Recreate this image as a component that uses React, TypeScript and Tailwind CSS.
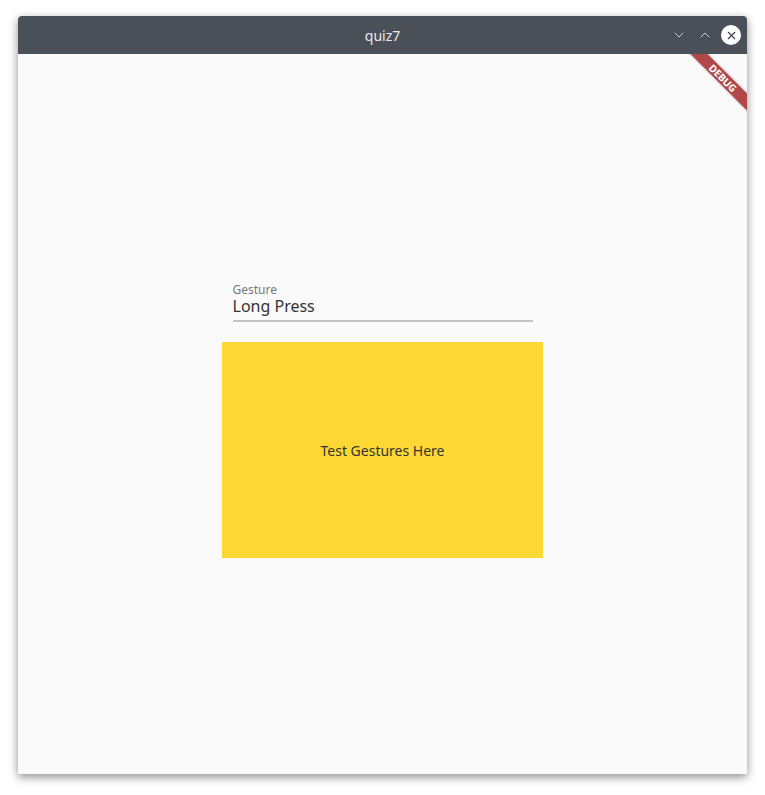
import { ChevronDown, ChevronUp, X } from "lucide-react";

const font = { fontFamily: '"Noto Sans", "Open Sans", sans-serif' };

const DebugBanner = () => (
  <div className="pointer-events-none absolute right-0 top-0 h-[72px] w-[72px] overflow-hidden">
    <div className="absolute right-[-26px] top-[18px] h-[12px] w-[100px] rotate-45 bg-[#b2474a] text-center text-[10px] font-bold leading-[12px] text-white shadow-[0_0_3px_rgba(0,0,0,0.3)]">
      DEBUG
    </div>
  </div>
);

export default function App() {
  return (
    <div className="h-[795px] w-[765px] bg-white pl-[18px] pt-[16px]" style={font}>
      <div className="flex h-[758px] w-[729px] flex-col overflow-hidden rounded-t-[4px] shadow-[0_3px_10px_rgba(0,0,0,0.45)]">
        <div className="relative flex h-[38px] items-center justify-center bg-[#495058]">
          <span className="text-[14px] text-[#e8eaed]">quiz7</span>
          <div className="absolute right-[6px] top-0 flex h-full items-center">
            <ChevronDown className="h-[16px] w-[16px] text-[#c8ccd0]" strokeWidth={1.5} />
            <ChevronUp className="ml-[10px] h-[16px] w-[16px] text-[#c8ccd0]" strokeWidth={1.5} />
            <div className="ml-[8px] flex h-[20px] w-[20px] items-center justify-center rounded-full bg-white">
              <X className="h-[13px] w-[13px] text-[#3a3f45]" strokeWidth={2} />
            </div>
          </div>
        </div>
        <div className="relative flex flex-1 flex-col items-center bg-[#fafafa] pt-[229px]">
          <DebugBanner />
          <div className="w-[300px] border-b-2 border-[#c4c4c4] pb-[5px]">
            <div className="text-[12px] leading-[14px] text-[#777]">Gesture</div>
            <div className="text-[16px] leading-[18px] text-[#333]">Long Press</div>
          </div>
          <div className="mt-[20px] flex h-[216px] w-[321px] items-center justify-center bg-[#fdd835]">
            <span className="text-[14px] text-[#333]">Test Gestures Here</span>
          </div>
        </div>
      </div>
    </div>
  );
}
